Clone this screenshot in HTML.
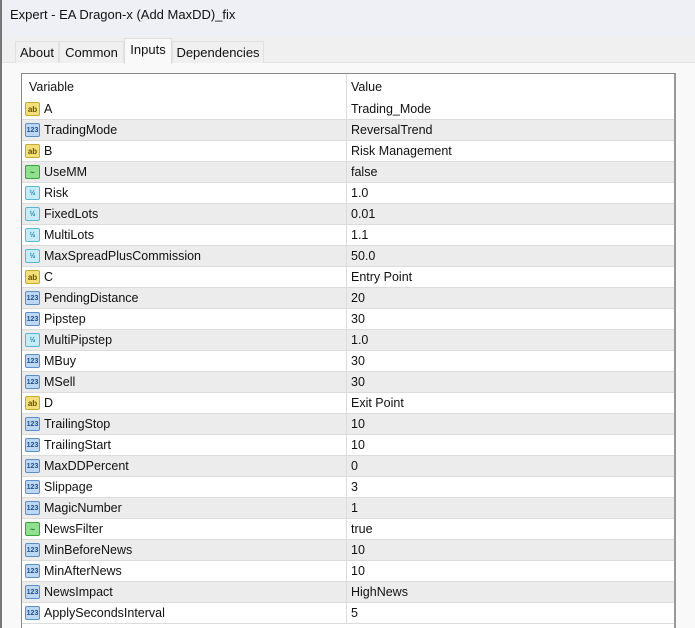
<!DOCTYPE html>
<html style="width:695px;height:628px;overflow:hidden"><head><style>
*{margin:0;padding:0;box-sizing:border-box}
body{width:695px;height:628px;overflow:hidden;background:#f9f9f9;font-family:"Liberation Sans",sans-serif;font-size:12.5px;color:#111;position:relative}
.title{position:absolute;left:0;top:0;width:695px;height:36px;background:#eff0f6}
.title span{position:absolute;left:10px;top:7px;font-size:13px}
.strip{position:absolute;left:0;top:36px;width:695px;height:27px;background:#f0f0f0;border-bottom:1px solid #e3e3e3}
.lb{position:absolute;left:0;top:0;width:2px;height:628px;background:#777}
.tab{position:absolute;top:41px;height:22px;background:#f0f0f0;border:1px solid #e0e0e0;border-bottom:none;padding:3px 0 0 0;text-align:center;font-size:13px}
.tab.sel{top:38px;height:26px;background:#f9f9f9;border-color:#ddd}
.tbl{position:absolute;left:21px;top:73px;width:655px;height:555px;background:#fff;border:1px solid #888;border-right:2px solid #999;border-bottom:none}
.row{position:absolute;left:0;width:652px;height:21px;border-bottom:1px solid #dcdcdc}
.row.g{background:#ececec}
.row .n{position:absolute;left:22px;top:3px}
.row .v{position:absolute;left:329px;top:3px}
.row .d{position:absolute;left:324px;top:0;width:1px;height:21px;background:#dcdcdc}
.ic{position:absolute;left:3px;top:3px;width:15px;height:14px;border-radius:2px;font-size:8px;line-height:14px;text-align:center;font-weight:bold}
.ab{background:#f3e07a;border:1px solid #c8a933;color:#6a5200}
.i1{background:#bcd8f4;border:1px solid #5b8fcb;color:#1d4f8a;font-size:7px}
.vz{background:#c5ecf8;border:1px solid #5bb6d6;color:#1a78a0;font-size:7px}
.bl{background:#8fe08f;border:1px solid #3aa43a;color:#176a17}
</style></head><body>
<div class="title"><span>Expert - EA Dragon-x (Add MaxDD)_fix</span></div>
<div class="strip"></div>
<div class="lb"></div>
<div class="tab" style="left:15px;width:44px">About</div>
<div class="tab" style="left:59px;width:65px">Common</div>
<div class="tab sel" style="left:124px;width:48px">Inputs</div>
<div class="tab" style="left:172px;width:92px">Dependencies</div>
<div class="tbl">
<div class="row" style="top:0;height:25px;border-bottom:none"><span class="n" style="left:7px;top:6px">Variable</span><span class="d" style="height:25px"></span><span class="v" style="top:6px">Value</span></div>
</div>
<div style="position:absolute;left:22px;top:99px">
<div class="row" style="top:0"><div class="ic ab">ab</div><span class="n">A</span><span class="d"></span><span class="v">Trading_Mode</span></div>
<div class="row g" style="top:21px"><div class="ic i1">123</div><span class="n">TradingMode</span><span class="d"></span><span class="v">ReversalTrend</span></div>
<div class="row" style="top:42px"><div class="ic ab">ab</div><span class="n">B</span><span class="d"></span><span class="v">Risk Management</span></div>
<div class="row g" style="top:63px"><div class="ic bl">~</div><span class="n">UseMM</span><span class="d"></span><span class="v">false</span></div>
<div class="row" style="top:84px"><div class="ic vz">½</div><span class="n">Risk</span><span class="d"></span><span class="v">1.0</span></div>
<div class="row g" style="top:105px"><div class="ic vz">½</div><span class="n">FixedLots</span><span class="d"></span><span class="v">0.01</span></div>
<div class="row" style="top:126px"><div class="ic vz">½</div><span class="n">MultiLots</span><span class="d"></span><span class="v">1.1</span></div>
<div class="row g" style="top:147px"><div class="ic vz">½</div><span class="n">MaxSpreadPlusCommission</span><span class="d"></span><span class="v">50.0</span></div>
<div class="row" style="top:168px"><div class="ic ab">ab</div><span class="n">C</span><span class="d"></span><span class="v">Entry Point</span></div>
<div class="row g" style="top:189px"><div class="ic i1">123</div><span class="n">PendingDistance</span><span class="d"></span><span class="v">20</span></div>
<div class="row" style="top:210px"><div class="ic i1">123</div><span class="n">Pipstep</span><span class="d"></span><span class="v">30</span></div>
<div class="row g" style="top:231px"><div class="ic vz">½</div><span class="n">MultiPipstep</span><span class="d"></span><span class="v">1.0</span></div>
<div class="row" style="top:252px"><div class="ic i1">123</div><span class="n">MBuy</span><span class="d"></span><span class="v">30</span></div>
<div class="row g" style="top:273px"><div class="ic i1">123</div><span class="n">MSell</span><span class="d"></span><span class="v">30</span></div>
<div class="row" style="top:294px"><div class="ic ab">ab</div><span class="n">D</span><span class="d"></span><span class="v">Exit Point</span></div>
<div class="row g" style="top:315px"><div class="ic i1">123</div><span class="n">TrailingStop</span><span class="d"></span><span class="v">10</span></div>
<div class="row" style="top:336px"><div class="ic i1">123</div><span class="n">TrailingStart</span><span class="d"></span><span class="v">10</span></div>
<div class="row g" style="top:357px"><div class="ic i1">123</div><span class="n">MaxDDPercent</span><span class="d"></span><span class="v">0</span></div>
<div class="row" style="top:378px"><div class="ic i1">123</div><span class="n">Slippage</span><span class="d"></span><span class="v">3</span></div>
<div class="row g" style="top:399px"><div class="ic i1">123</div><span class="n">MagicNumber</span><span class="d"></span><span class="v">1</span></div>
<div class="row" style="top:420px"><div class="ic bl">~</div><span class="n">NewsFilter</span><span class="d"></span><span class="v">true</span></div>
<div class="row g" style="top:441px"><div class="ic i1">123</div><span class="n">MinBeforeNews</span><span class="d"></span><span class="v">10</span></div>
<div class="row" style="top:462px"><div class="ic i1">123</div><span class="n">MinAfterNews</span><span class="d"></span><span class="v">10</span></div>
<div class="row g" style="top:483px"><div class="ic i1">123</div><span class="n">NewsImpact</span><span class="d"></span><span class="v">HighNews</span></div>
<div class="row" style="top:504px"><div class="ic i1">123</div><span class="n">ApplySecondsInterval</span><span class="d"></span><span class="v">5</span></div>
</div>
</body></html>
